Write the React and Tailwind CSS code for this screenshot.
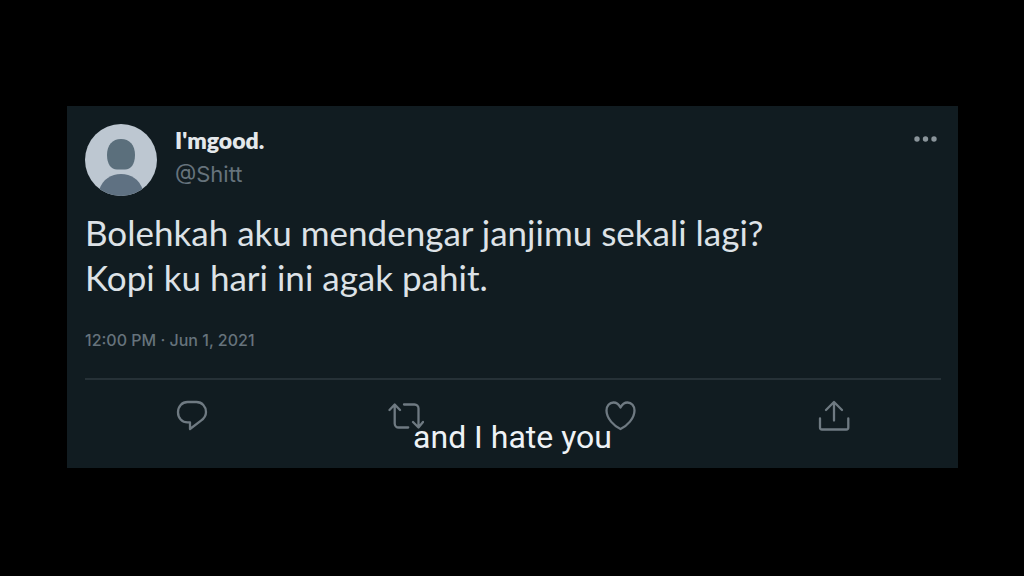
function Avatar() {
  return (
    <svg viewBox="0 0 72 72" className="size-18 shrink-0" role="img" aria-label="Profile picture">
      <defs>
        <clipPath id="avatar-circle">
          <circle cx="36" cy="36" r="36" />
        </clipPath>
      </defs>
      <g clipPath="url(#avatar-circle)">
        <rect width="72" height="72" fill="#bdc7d1" />
        <path d="M36 15C27.500 15 22 21 22 31C22 40 26 45.500 32 45.500H40C46 45.500 50 40 50 31C50 21 44.500 15 36 15Z" fill="#5b6f7c" />
        <path d="M14 66C18 55 26 50 36 50S54 55 58 66V72H14Z" fill="#5f7182" />
      </g>
    </svg>
  );
}

function Action({ label, children }) {
  return (
    <button type="button" aria-label={label} className="flex justify-center">
      <svg
        viewBox="0 0 36 32"
        className="h-8 w-9"
        fill="none"
        stroke="#6f7a82"
        strokeWidth="2.300"
        strokeLinecap="round"
        strokeLinejoin="round"
      >
        {children}
      </svg>
    </button>
  );
}

export default function App() {
  return (
    <main className="flex min-h-screen items-center bg-black pr-[66px] pb-0.5 pl-[67px]">
      <article className="relative flex-1 bg-[#111c21] pt-[18px] pr-[17px] pb-9 pl-[18px] font-['Inter',sans-serif]">
        <header className="flex">
          <Avatar />
          <div className="ml-[18px] flex-1">
            <h1 className="font-['Lato',sans-serif] text-[23px] leading-8 font-extrabold text-[#e4e8eb]">I'mgood.</h1>
            <p className="text-[22px] leading-9 text-[#66737c]">@Shitt</p>
          </div>
          <button type="button" aria-label="More" className="flex h-[30px] items-center self-start">
            <svg viewBox="0 0 28 8" className="h-2 w-7" fill="#8a949a">
              <circle cx="4" cy="4" r="2.700" />
              <circle cx="12.500" cy="4" r="2.700" />
              <circle cx="21" cy="4" r="2.700" />
            </svg>
          </button>
        </header>
        <p className="mt-[14px] font-['Lato',sans-serif] text-[35px] leading-[45px] text-[#dde2e7]">
          Bolehkah aku mendengar janjimu sekali lagi?
          <br />
          Kopi ku hari ini agak pahit.
        </p>
        <time dateTime="2021-06-01T12:00" className="mt-7 block text-[16px] leading-6 font-medium text-[#66737c]">
          12:00 PM · Jun 1, 2021
        </time>
        <div className="mt-[26px] grid grid-cols-4 border-t-2 border-[#263137] pt-5">
          <Action label="Reply">
            <path d="M13.500 2h9C28 2 32 6.500 32 12c0 4-2 6.500-5 8.600L16 29v-6.600h-2.500C8 22.400 4 18 4 12.200S8 2 13.500 2z" />
          </Action>
          <Action label="Retweet">
            <path d="M1.500 10L6.700 4.500 12 10M6.700 5v18.500a4 4 0 0 0 4 4h9.500M16 4.500h10.500a4 4 0 0 1 4 4V27M25 22l5.500 5.500L35 22" />
          </Action>
          <Action label="Like">
            <path d="M18.500 7.500C17 4.500 14.500 2.500 11.500 2.500C7.500 2.500 4.500 6 4.500 10.500C4.500 18.500 12 26 18.500 29C25 26 32.500 18.500 32.500 10.500C32.500 6 29.500 2.500 25.500 2.500C22.500 2.500 20 4.500 18.500 7.500Z" />
          </Action>
          <Action label="Share">
            <path d="M10 10l8-8 8 8M18 2.500v18M4 18.500v9a2 2 0 0 0 2 2h24.300a2 2 0 0 0 2-2v-9" />
          </Action>
        </div>
        <p className="absolute inset-x-0 bottom-[13px] text-center font-['Roboto',sans-serif] text-[32px] leading-9 text-[#eef2f6]">
          and I hate you
        </p>
      </article>
    </main>
  );
}
